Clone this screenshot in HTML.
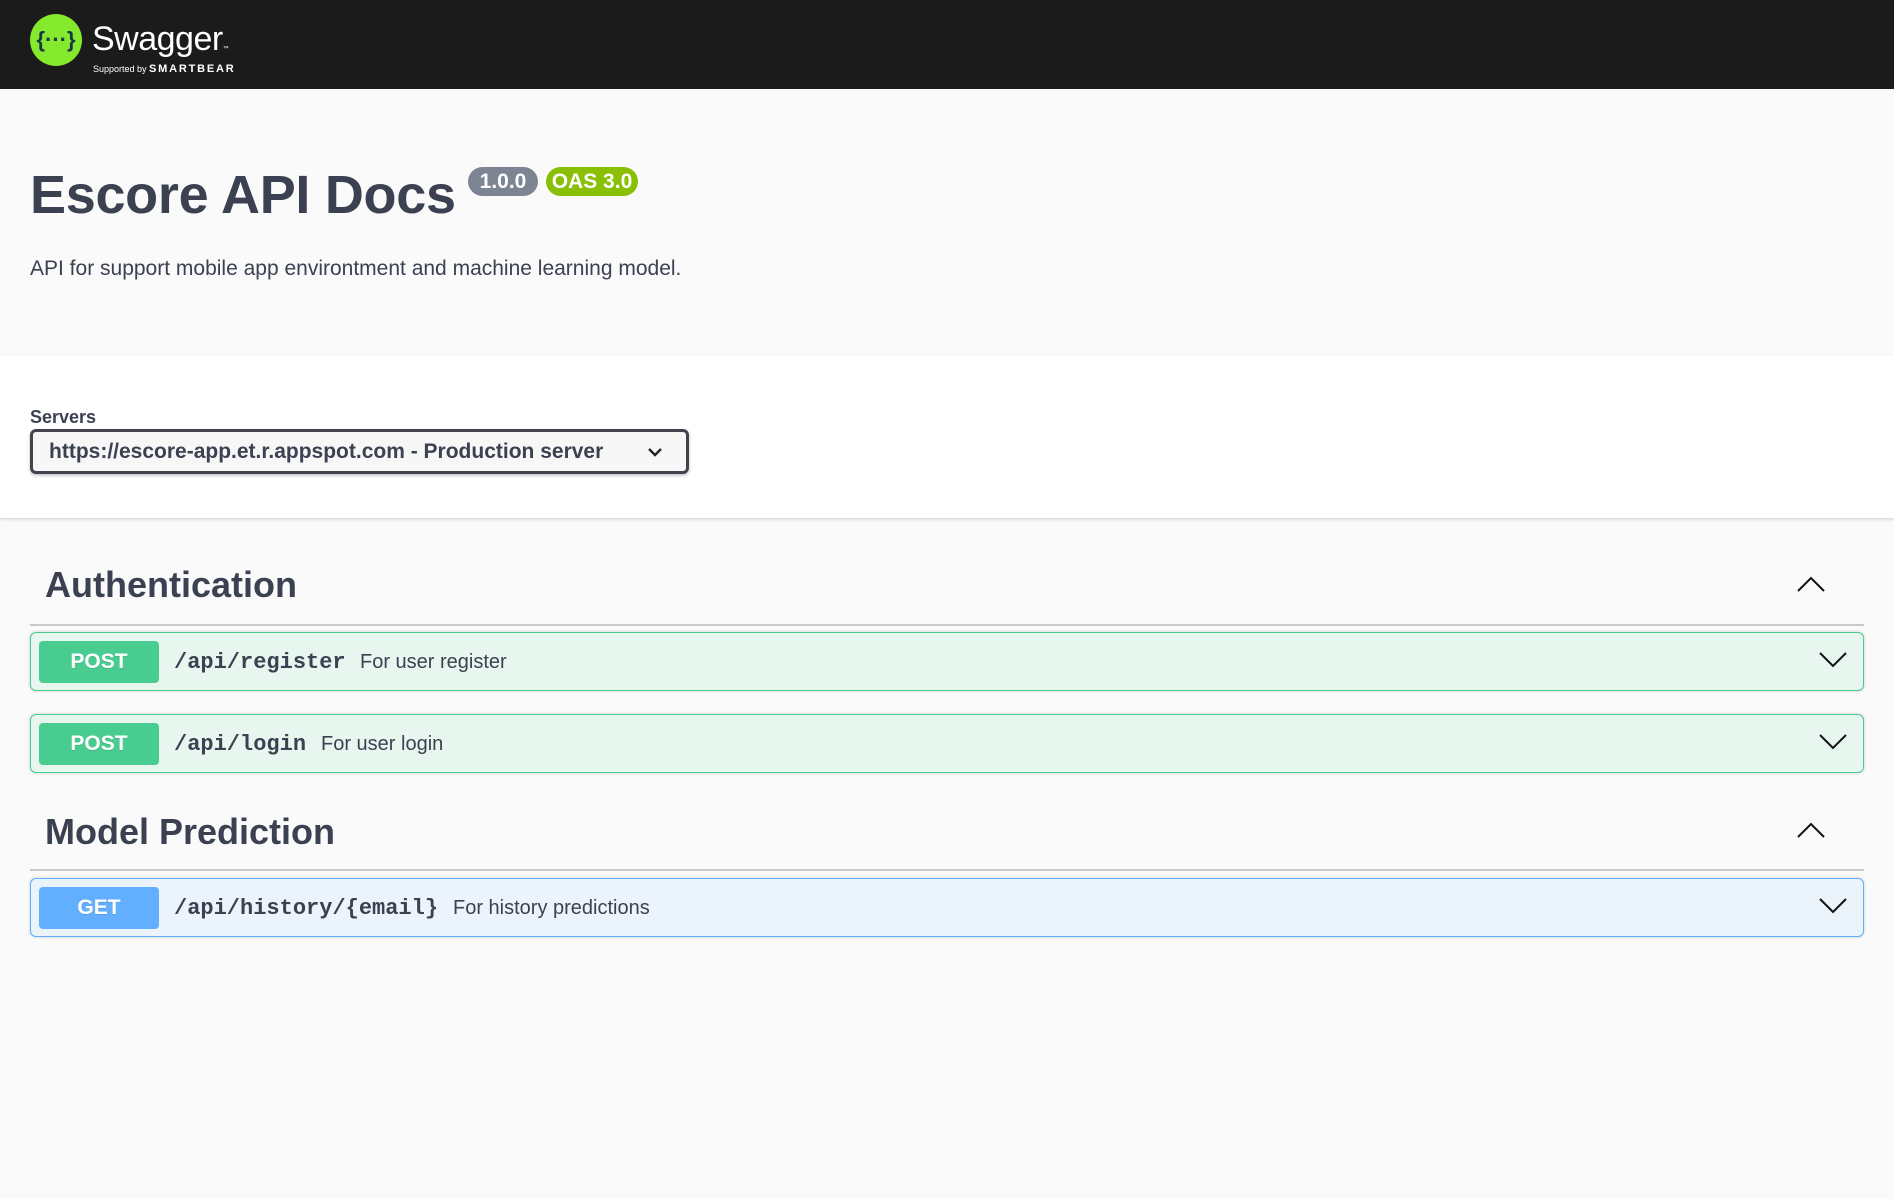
<!DOCTYPE html>
<html><head><meta charset="utf-8"><style>
*{box-sizing:border-box;margin:0;padding:0}
html,body{width:1894px;height:1199px;overflow:hidden;background:#fafafa;font-family:"Liberation Sans",Arial,sans-serif;color:#3b4151}
.abs{position:absolute}
.top{left:0;top:0;width:1894px;height:89px;background:#1b1b1b}
.info{left:0;top:89px;width:1894px;height:267px;background:#fafafa}
.srv{left:0;top:356px;width:1894px;height:162px;background:#fff;box-shadow:0 1.5px 3px rgba(0,0,0,.15)}
.badge{height:29px;border-radius:15px;color:#fff;font-weight:bold;font-size:21px;line-height:29px;text-align:center}
.sel{left:30px;top:429px;width:659px;height:45px;border:3px solid #41444e;border-radius:6px;background:#f7f7f7;box-shadow:0 1.5px 3px rgba(0,0,0,.25);font-weight:bold;font-size:21px;line-height:40px;padding-left:16px;color:#3b4151}
.tag{left:45px;font-size:36px;font-weight:bold;color:#3b4151}
.line{left:30px;width:1834px;height:1.5px;background:#c8c9cc}
.op{left:30px;width:1834px;height:59px;border:1.5px solid #49cc90;background:#e8f6f0;border-radius:6px;box-shadow:0 0 3px rgba(0,0,0,.19)}
.op.get{border-color:#61affe;background:#ebf3fb}
.m{position:absolute;left:8px;top:8px;width:120px;height:42px;border-radius:4px;background:#49cc90;color:#fff;font-weight:bold;font-size:21px;line-height:42px;text-align:center;text-shadow:0 1px 0 rgba(0,0,0,.1)}
.get .m{background:#61affe}
.p{position:absolute;left:143px;top:2px;line-height:56px;font-family:"Liberation Mono",monospace;font-weight:bold;font-size:22px;color:#3b4151}
.d{position:absolute;top:1px;line-height:56px;font-size:20px;color:#3b4151}
.chev{position:absolute;right:16px;top:18px}
</style></head><body>
<div class="abs top">
<svg class="abs" style="left:30px;top:14px" width="52" height="52" viewBox="0 0 52 52"><circle cx="26" cy="26" r="26" fill="#85ea2d"/><text x="26" y="33" text-anchor="middle" font-family="Liberation Sans,sans-serif" font-size="22" font-weight="bold" fill="#173647">{···}</text></svg>
<div class="abs" style="left:92px;top:20px;font-size:34px;color:#fff;letter-spacing:-0.5px">Swagger<span style="font-size:6px">™</span></div>
<div class="abs" style="left:93px;top:63px;font-size:9px;color:#fff">Supported by <span style="font-size:11px;font-weight:bold;letter-spacing:1.8px">SMARTBEAR</span></div>
</div>
<div class="abs info">
<div class="abs" style="left:30px;top:75px;font-size:54px;font-weight:bold;color:#3b4151;letter-spacing:-0.3px">Escore API Docs</div>
<div class="abs badge" style="left:468px;top:78px;width:70px;background:#7d8492">1.0.0</div>
<div class="abs badge" style="left:546px;top:78px;width:92px;background:#89bf04">OAS 3.0</div>
<div class="abs" style="left:30px;top:168px;font-size:21px">API for support mobile app environtment and machine learning model.</div>
</div>
<div class="abs srv"><div class="abs" style="left:30px;top:51px;font-size:18px;font-weight:bold">Servers</div></div>
<div class="abs sel">https://escore-app.et.r.appspot.com - Production server
<svg class="abs" style="left:614px;top:14px" width="16" height="12" viewBox="0 0 16 12"><path d="M2 3l6 6 6-6" fill="none" stroke="#222" stroke-width="2.4"/></svg></div>

<div class="abs tag" style="top:564px">Authentication</div>
<svg class="abs" style="left:1797px;top:576px" width="28" height="17" viewBox="0 0 28 17"><path d="M1 15L14 2l13 13" fill="none" stroke="#111" stroke-width="2"/></svg>
<div class="abs line" style="top:624px"></div>
<div class="abs op" style="top:632px"><div class="m">POST</div><div class="p">/api/register</div><div class="d" style="left:329px">For user register</div>
<svg class="chev" width="28" height="17" viewBox="0 0 28 17"><path d="M1 2l13 13 13-13" fill="none" stroke="#111" stroke-width="2"/></svg></div>
<div class="abs op" style="top:714px"><div class="m">POST</div><div class="p">/api/login</div><div class="d" style="left:290px">For user login</div>
<svg class="chev" width="28" height="17" viewBox="0 0 28 17"><path d="M1 2l13 13 13-13" fill="none" stroke="#111" stroke-width="2"/></svg></div>

<div class="abs tag" style="top:811px">Model Prediction</div>
<svg class="abs" style="left:1797px;top:822px" width="28" height="17" viewBox="0 0 28 17"><path d="M1 15L14 2l13 13" fill="none" stroke="#111" stroke-width="2"/></svg>
<div class="abs line" style="top:869px"></div>
<div class="abs op get" style="top:878px"><div class="m">GET</div><div class="p">/api/history/{email}</div><div class="d" style="left:422px">For history predictions</div>
<svg class="chev" width="28" height="17" viewBox="0 0 28 17"><path d="M1 2l13 13 13-13" fill="none" stroke="#111" stroke-width="2"/></svg></div>
</body></html>
